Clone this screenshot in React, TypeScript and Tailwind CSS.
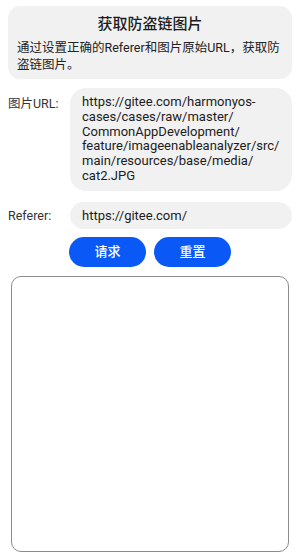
import React from "react";

const font = { fontFamily: 'Roboto, "Noto Sans CJK SC", sans-serif' };

const urlLines = [
  "https://gitee.com/harmonyos-",
  "cases/cases/raw/master/",
  "CommonAppDevelopment/",
  "feature/imageenableanalyzer/src/",
  "main/resources/base/media/",
  "cat2.JPG",
];

export default function App() {
  return (
    <div
      className="w-[300px] h-[555px] bg-white flex flex-col text-[#1c1c1c] overflow-hidden"
      style={font}
    >
      <div className="mt-[6px] mx-[8px] rounded-[12px] bg-[#f1f1f1] px-[9px] pt-[7px] pb-[6px] flex flex-col">
        <div className="text-center text-[15px] font-medium leading-[22px]">获取防盗链图片</div>
        <div className="mt-[4px] text-[12.5px] leading-[17px] text-[#222] whitespace-nowrap">
          <div>通过设置正确的Referer和图片原始URL，获取防</div>
          <div>盗链图片。</div>
        </div>
      </div>

      <div className="mt-[9px] mx-[8px] flex items-start">
        <div className="w-[62px] pt-[7px] text-[12.5px] leading-[17px] text-[#333]">图片URL:</div>
        <div className="flex-1 rounded-[16px] bg-[#f1f1f1] pl-[12px] pr-[8px] py-[7px] text-[13px] leading-[14.8px] text-[#1c1c1c] whitespace-nowrap">
          {urlLines.map((l) => (
            <div key={l}>{l}</div>
          ))}
        </div>
      </div>

      <div className="mt-[11px] mx-[8px] flex items-center">
        <div className="w-[62px] text-[12.5px] leading-[17px] text-[#333]">Referer:</div>
        <div className="flex-1 h-[27px] rounded-full bg-[#f1f1f1] pl-[12px] flex items-center text-[13px]">
          https://gitee.com/
        </div>
      </div>

      <div className="mt-[8px] flex justify-center gap-[8px]">
        <button className="w-[77px] h-[30px] rounded-full bg-[#0a59f7] text-white text-[13px] font-medium">
          请求
        </button>
        <button className="w-[77px] h-[30px] rounded-full bg-[#0a59f7] text-white text-[13px] font-medium">
          重置
        </button>
      </div>

      <div className="mt-[9px] mx-[11px] h-[276px] rounded-[10px] border-[1.5px] border-[#8c8c8c]" />
    </div>
  );
}
